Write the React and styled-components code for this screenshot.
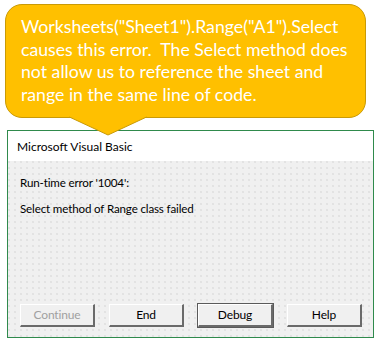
import React from "react";
import styled, { createGlobalStyle } from "styled-components";

const Global = createGlobalStyle`
  html, body { margin: 0; padding: 0; background: #ffffff; }
  #root { width: 381px; height: 346px; overflow: hidden; }
`;

const Page = styled.div`
  width: 381px;
  height: 346px;
  padding-top: 4px;
  box-sizing: border-box;
  display: flex;
  flex-direction: column;
  background: #ffffff;
`;

const Callout = styled.div`
  position: relative;
  z-index: 2;
  margin-left: 5px;
  width: 361px;
  height: 114px;
  box-sizing: border-box;
  padding: 11px 8px 0 15px;
  background: #ffc000;
  border: 1px solid #c99a06;
  border-radius: 17px;
  color: #ffffff;
  font-family: Lato, "Liberation Sans", sans-serif;
  font-size: 17.7px;
  line-height: 22.7px;
  white-space: nowrap;
`;

const Pointer = styled.svg`
  position: absolute;
  left: 56px;
  top: 109px;
  overflow: visible;
`;

const Dialog = styled.div`
  margin: 12px 0 0 7px;
  width: 367px;
  height: 208px;
  box-sizing: border-box;
  border: 1px solid #2f8a4c;
  display: flex;
  flex-direction: column;
  font-family: Lato, "Liberation Sans", sans-serif;
  font-size: 11.6px;
  letter-spacing: -0.15px;
  color: #000000;
`;

const TitleBar = styled.div`
  height: 30px;
  background: #ffffff;
  display: flex;
  align-items: center;
  padding-left: 9px;
  font-size: 12px;
  letter-spacing: 0;
`;

const Body = styled.div`
  flex: 1;
  display: flex;
  flex-direction: column;
  padding: 14px 11px 10px 12px;
  background-color: #f0f0f0;
  background-image: radial-gradient(circle at 1px 1px, #e2e2e2 0.7px, transparent 1px);
  background-size: 6px 6px;
`;

const Message = styled.div`
  line-height: 16px;
  margin-bottom: ${(p) => p.$gap || 0}px;
`;

const ButtonRow = styled.div`
  margin-top: auto;
  display: flex;
  gap: 14px;
`;

const Button = styled.div`
  width: 75px;
  height: 23px;
  box-sizing: border-box;
  display: flex;
  align-items: center;
  justify-content: center;
  background: #f0f0f0;
  font-size: 12px;
  color: ${(p) => (p.$disabled ? "#a0a0a0" : "#000000")};
  border-top: 1px solid #ffffff;
  border-left: 1px solid #ffffff;
  border-right: 2px solid #6a6a6a;
  border-bottom: 2px solid #6a6a6a;
  box-shadow: ${(p) => (p.$default ? "0 0 0 1px #5a5a5a" : "none")};
  padding-bottom: 1px;
`;

export default function App() {
  return (
    <>
      <Global />
      <Page>
        <Callout>
          Worksheets("Sheet1").Range("A1").Select
          <br />
          causes this error.&nbsp; The Select method does
          <br />
          not allow us to reference the sheet and
          <br />
          range in the same line of code.
          <Pointer width="92" height="22" viewBox="0 0 92 22">
            <polygon points="1,0 91,0 46,21" fill="#ffc000" />
            <polyline points="7.4,3 46,21 84.6,3" fill="none" stroke="#c99a06" strokeWidth="1" />
          </Pointer>
        </Callout>
        <Dialog>
          <TitleBar>Microsoft Visual Basic</TitleBar>
          <Body>
            <Message $gap={10}>Run-time error '1004':</Message>
            <Message>Select method of Range class failed</Message>
            <ButtonRow>
              <Button $disabled>Continue</Button>
              <Button>End</Button>
              <Button $default>Debug</Button>
              <Button>Help</Button>
            </ButtonRow>
          </Body>
        </Dialog>
      </Page>
    </>
  );
}
